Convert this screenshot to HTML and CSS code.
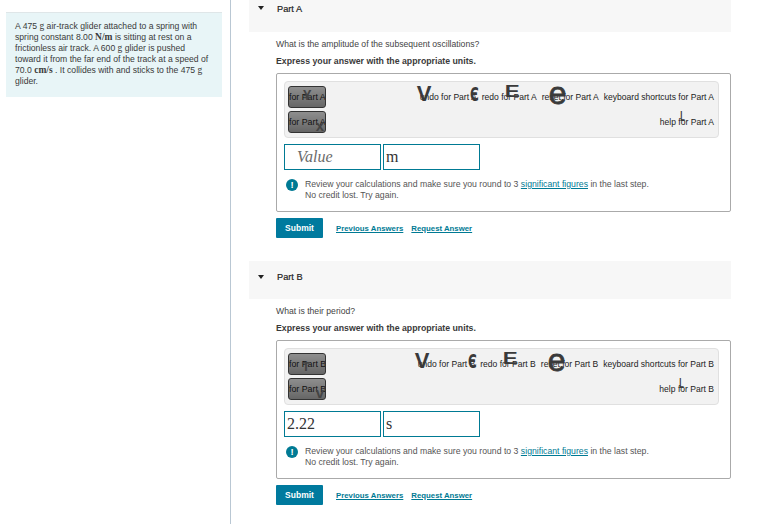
FILE: index.html
```html
<!DOCTYPE html>
<html lang="en">
<head>
<meta charset="utf-8">
<title>Part A and Part B</title>
<link rel="stylesheet" href="styles.css">
</head>
<body>
<div class="page">
  <aside class="side">
    <div class="intro">A 475 <span class="m">g</span> air-track glider attached to a spring with spring constant 8.00 <span class="m b">N/m</span> is sitting at rest on a frictionless air track. A 600 <span class="m">g</span> glider is pushed toward it from the far end of the track at a speed of 70.0 <span class="m b">cm/s</span> . It collides with and sticks to the 475 <span class="m">g</span> glider.</div>
  </aside>
  <main class="main">
    <section class="part">
      <h2 class="head"><span class="tri"></span>Part A</h2>
      <p class="q">What is the amplitude of the subsequent oscillations?</p>
      <p class="exp">Express your answer with the appropriate units.</p>
      <div class="box">
        <div class="toolbar">
          <div class="btns">
            <div class="btn"><span class="gl g1">¥</span>for Part A</div>
            <div class="btn"><span class="gl g2">x</span>for Part A</div>
          </div>
          <div class="tools">
            <div class="row">
              <span class="tool"><span class="ic i1">V</span><span class="ic i2">Є</span>undo for Part A</span>
              <span class="tool"><span class="ic i5">E</span>redo for Part A</span>
              <span class="tool"><span class="ic i3">e</span>reset for Part A</span>
              <span class="tool">keyboard shortcuts for Part A</span>
            </div>
            <div class="row"><span class="tool"><span class="ic i4">L</span>help for Part A</span></div>
          </div>
        </div>
        <div class="inputs">
          <div class="field ph">Value</div>
          <div class="field">m</div>
        </div>
        <div class="note">
          <span class="bang">!</span>
          <div>Review your calculations and make sure you round to 3 <a class="lnk" href="#">significant figures</a> in the last step.<br>No credit lost. Try again.</div>
        </div>
      </div>
      <div class="actions">
        <button class="submit">Submit</button>
        <a class="act" href="#">Previous Answers</a>
        <a class="act" href="#">Request Answer</a>
      </div>
    </section>
    <section class="part">
      <h2 class="head head-b"><span class="tri"></span>Part B</h2>
      <p class="q">What is their period?</p>
      <p class="exp">Express your answer with the appropriate units.</p>
      <div class="box">
        <div class="toolbar">
          <div class="btns">
            <div class="btn"><span class="gl g3">T</span>for Part B</div>
            <div class="btn"><span class="gl g2">v</span>for Part B</div>
          </div>
          <div class="tools">
            <div class="row">
              <span class="tool"><span class="ic i1">V</span><span class="ic i2">Є</span>undo for Part B</span>
              <span class="tool"><span class="ic i5">E</span>redo for Part B</span>
              <span class="tool"><span class="ic i3">e</span>reset for Part B</span>
              <span class="tool">keyboard shortcuts for Part B</span>
            </div>
            <div class="row"><span class="tool"><span class="ic i4">L</span>help for Part B</span></div>
          </div>
        </div>
        <div class="inputs">
          <div class="field">2.22</div>
          <div class="field">s</div>
        </div>
        <div class="note">
          <span class="bang">!</span>
          <div>Review your calculations and make sure you round to 3 <a class="lnk" href="#">significant figures</a> in the last step.<br>No credit lost. Try again.</div>
        </div>
      </div>
      <div class="actions">
        <button class="submit">Submit</button>
        <a class="act" href="#">Previous Answers</a>
        <a class="act" href="#">Request Answer</a>
      </div>
    </section>
  </main>
</div>
</body>
</html>
```
FILE: styles.css
```css
html, body { margin: 0; padding: 0; background: #fff; height: 100%; overflow: hidden; }
body { font-family: "Liberation Sans", Arial, sans-serif; font-size: 8.5px; color: #333; }
.page { display: flex; height: 524px; }
.side { width: 231px; flex: none; box-sizing: border-box; border-right: 1px solid #b9c7d3; padding: 12px 8px 0 6px; }
.intro { background: #e8f5f7; border-top: 1px solid #dfe6e8; padding: 8px 10px 5px 9px; height: 85px; box-sizing: border-box; font-size: 8.65px; line-height: 10.9px; color: #3a3a3a; }
.m { font-family: "Liberation Serif", serif; font-size: 9.5px; }
.b { font-weight: bold; }
.main { margin-left: 18px; width: 482px; flex: none; margin-top: -5px; }
.part { height: 266px; }
.head { margin: 0; height: 37px; box-sizing: border-box; background: #f7f7f7; padding: 9px 0 0 28px; font-size: 9.2px; line-height: 10px; font-weight: normal; color: #222; position: relative; -webkit-text-stroke: 0.2px #222; }
.head-b { height: 38px; padding-top: 11px; }
.tri { position: absolute; left: 9px; top: 11px; width: 0; height: 0; border-left: 3.5px solid transparent; border-right: 3.5px solid transparent; border-top: 4px solid #222; }
.head-b .tri { top: 14px; }
.q { margin: 7px 0 0 27px; height: 11px; line-height: 11px; font-size: 8.65px; color: #444; }
.exp { margin: 6px 0 0 27px; height: 11px; line-height: 11px; font-size: 8.75px; font-weight: bold; color: #3a3a3a; }
.box { margin: 6px 0 0 27px; width: 455px; height: 139px; box-sizing: border-box; border: 1px solid #aaa; border-radius: 2px; padding: 7px; }
.toolbar { display: flex; justify-content: space-between; height: 57px; box-sizing: border-box; background: #f2f2f2; border: 1px solid #e0e0e0; border-radius: 4px; padding: 4px 4px 2px 3px; width: 435px; }
.btns { display: flex; flex-direction: column; gap: 3px; }
.btn { position: relative; width: 38px; height: 22px; box-sizing: border-box; background: linear-gradient(#8e8e8e, #666); border: 1px solid #333; border-radius: 3px; font-size: 8.8px; line-height: 20px; color: #111; white-space: nowrap; overflow: hidden; text-align: center; }
.gl { position: absolute; font-size: 15px; font-weight: bold; color: #444; line-height: 16px; }
.g1 { left: 14px; top: 0; }
.g2 { right: 1px; top: 6px; }
.g3 { left: 13px; top: 5px; font-size: 13px; }
.tools { display: flex; flex-direction: column; gap: 14px; padding-top: 6px; }
.row { display: flex; justify-content: flex-end; gap: 5px; height: 11px; line-height: 11px; font-size: 8.55px; color: #222; white-space: nowrap; }
.tool { position: relative; }
.ic { position: absolute; font-weight: bold; color: #3a3a3a; line-height: 20px; }
.i1 { left: -3px; top: -8px; font-size: 22px; }
.i2 { left: 47px; top: -8px; font-size: 20px; font-family: "DejaVu Sans", sans-serif; transform: scaleX(.6); }
.i5 { left: 25px; top: -10px; font-size: 16px; transform: scaleX(1.4); }
.i3 { left: 7px; top: -9px; font-size: 32px; font-weight: normal; -webkit-text-stroke: 0.8px #3a3a3a; }
.i4 { left: 18px; top: -11px; font-size: 15px; transform: scaleX(.5); }
.inputs { display: flex; gap: 2px; margin-top: 6px; }
.field { width: 97px; height: 26px; box-sizing: border-box; border: 1px solid #007a94; font-family: "Liberation Serif", serif; font-size: 16px; line-height: 24px; padding-left: 2px; color: #333; }
.ph { font-style: italic; color: #6b6b6b; padding-left: 12px; }
.note { display: flex; gap: 7px; margin: 9px 0 0 2px; line-height: 10.6px; font-size: 8.7px; color: #555; }
.bang { flex: none; width: 12px; height: 12px; border-radius: 50%; background: #007a94; color: #fff; font-size: 9.5px; font-weight: bold; line-height: 12px; text-align: center; }
.lnk, .act { color: #007a94; text-decoration: underline; }
.actions { display: flex; align-items: center; margin: 6px 0 0 27px; }
.submit { width: 47px; height: 20px; padding: 0; border: 0; border-radius: 1px; background: #007a9e; color: #fff; font: bold 8.5px "Liberation Sans", sans-serif; margin-right: 13px; }
.act { font-size: 7.8px; font-weight: bold; margin-right: 8px; }
```
